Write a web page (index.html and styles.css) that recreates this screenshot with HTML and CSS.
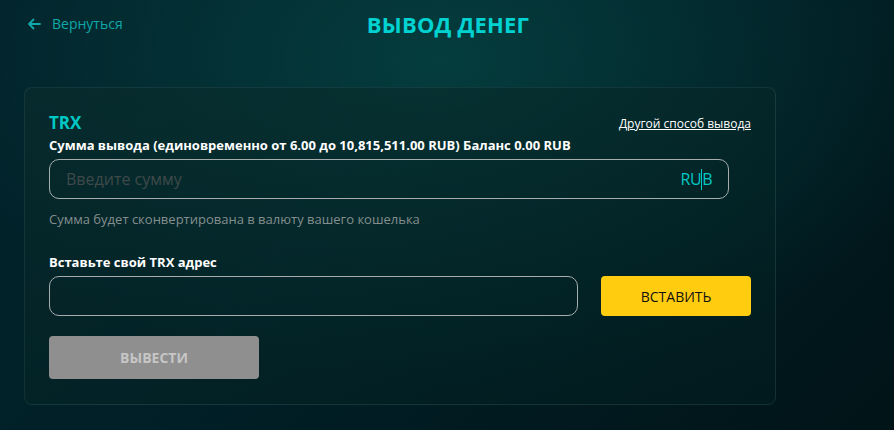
FILE: index.html
```html
<!DOCTYPE html>
<html lang="ru">
<head>
<meta charset="utf-8">
<link rel="stylesheet" href="styles.css">
</head>
<body>
<div class="page">
  <header class="top">
    <a class="back" href="#">
      <svg width="14" height="12" viewBox="0 0 14 12" class="arrow"><path d="M13 6H2M6.5 1.5L2 6l4.5 4.5" fill="none" stroke="currentColor" stroke-width="1.8" stroke-linecap="round" stroke-linejoin="round"/></svg>
      <span>Вернуться</span>
    </a>
    <h1 class="title">ВЫВОД ДЕНЕГ</h1>
  </header>
  <section class="card">
    <div class="head">
      <div class="coin">TRX</div>
      <a class="other" href="#">Другой способ вывода</a>
    </div>
    <div class="label">Сумма вывода (единовременно от 6.00 до 10,815,511.00 RUB) Баланс 0.00 RUB</div>
    <div class="field amount">
      <span class="ph">Введите сумму</span>
      <span class="cur">RU<i class="caret"></i>B</span>
    </div>
    <div class="hint">Сумма будет сконвертирована в валюту вашего кошелька</div>
    <div class="label label2">Вставьте свой TRX адрес</div>
    <div class="row">
      <div class="field addr"></div>
      <button class="paste">ВСТАВИТЬ</button>
    </div>
    <button class="submit">ВЫВЕСТИ</button>
  </section>
</div>
</body>
</html>
```
FILE: styles.css
```css
* { box-sizing: border-box; }
html, body { margin: 0; height: 100%; }
body {
  font-family: "Open Sans", "Noto Sans", sans-serif;
  background:
    radial-gradient(ellipse 520px 330px at 440px 60px, rgba(6, 70, 68, 0.75), rgba(6, 70, 68, 0) 100%),
    linear-gradient(135deg, #02222a 0%, #012028 40%, #011418 100%);
  color: #fff;
  overflow: hidden;
}
.page { width: 894px; height: 430px; padding: 0 24px; }
.top { position: relative; height: 87px; }
.back {
  position: absolute; left: 3px; top: 14px;
  display: flex; align-items: center; gap: 11px;
  color: #10a8a8; text-decoration: none; font-size: 14px;
}
.arrow { margin-top: 1px; }
.title {
  margin: 0; padding-top: 9px;
  text-align: center; font-size: 22px; font-weight: 700;
  color: #00d2d2; letter-spacing: 0.2px; line-height: 30px;
  margin-left: 2px;
}
.card {
  width: 752px; height: 318px;
  border-radius: 8px;
  border: 1px solid rgba(120, 160, 160, 0.14);
  background: linear-gradient(160deg, rgba(10, 45, 45, 0.6), rgba(2, 30, 32, 0.55));
  padding: 24px 24px 0 24px;
}
.head { display: flex; justify-content: space-between; align-items: flex-end; height: 25px; }
.coin { font-size: 17px; font-weight: 700; color: #00c8c4; line-height: 22px; margin-bottom: 3px; }
.other { color: #fff; font-size: 12px; text-decoration: underline; line-height: 16px; margin-bottom: 5px; }
.label { font-size: 13px; font-weight: 700; color: #fff; line-height: 16px; }
.field {
  border: 1px solid #a7adac; border-radius: 10px; height: 40px;
}
.amount {
  margin-top: 6px; width: 680px;
  display: flex; align-items: center; justify-content: space-between;
  padding: 0 16px 0 16px;
}
.ph { color: #3f4949; font-size: 16px; }
.cur { color: #00c8c4; font-size: 16px; letter-spacing: -0.5px; position: relative; }
.caret { display: inline-block; width: 1px; height: 21px; background: #00c8c4; vertical-align: -5px; margin: 0 0.5px 0 -0.5px; }
.hint { font-size: 13px; color: #848e8e; margin-top: 11px; line-height: 18px; }
.label2 { margin-top: 26px; }
.row { display: flex; gap: 23px; margin-top: 6px; }
.addr { width: 530px; height: 40px; }
.paste {
  width: 150px; height: 40px; border: 0; border-radius: 4px;
  background: #ffcc10; color: #111; font-family: inherit; font-size: 14px;
}
.submit {
  margin-top: 20px; width: 210px; height: 43px; border: 0; border-radius: 4px;
  background: #8f8f8f; color: #c6c6c6; font-family: inherit; font-size: 14px; font-weight: 700;
}
```
